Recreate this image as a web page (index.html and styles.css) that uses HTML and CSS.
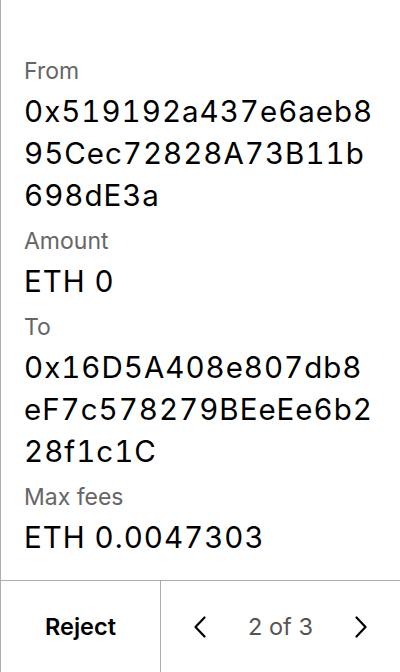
FILE: index.html
```html
<!DOCTYPE html>
<html>
<head>
<meta charset="utf-8">
<link rel="stylesheet" href="styles.css">
</head>
<body>
<div class="screen">
  <div class="details">
    <div class="field">
      <div class="label">From</div>
      <div class="value">0x519192a437e6aeb895Cec72828A73B11b698dE3a</div>
    </div>
    <div class="field">
      <div class="label">Amount</div>
      <div class="value">ETH 0</div>
    </div>
    <div class="field">
      <div class="label">To</div>
      <div class="value">0x16D5A408e807db8eF7c578279BEeEe6b228f1c1C</div>
    </div>
    <div class="field">
      <div class="label">Max fees</div>
      <div class="value">ETH 0.0047303</div>
    </div>
  </div>
  <div class="footer">
    <div class="reject">Reject</div>
    <div class="pager">
      <div class="nav">
        <svg width="14" height="22" viewBox="0 0 14 22"><polyline points="11.5,1.5 2.5,11 11.5,20.5" fill="none" stroke="#000" stroke-width="2.2" stroke-linecap="round" stroke-linejoin="round"/></svg>
      </div>
      <div class="count">2 of 3</div>
      <div class="nav">
        <svg width="14" height="22" viewBox="0 0 14 22"><polyline points="2.5,1.5 11.5,11 2.5,20.5" fill="none" stroke="#000" stroke-width="2.2" stroke-linecap="round" stroke-linejoin="round"/></svg>
      </div>
    </div>
  </div>
</div>
</body>
</html>
```

FILE: styles.css
```css
html, body {
  margin: 0;
  padding: 0;
  background: #fff;
}
body {
  font-family: Inter, "Noto Sans", sans-serif;
  color: #000;
}
.screen {
  width: 400px;
  height: 672px;
  box-sizing: border-box;
  border-left: 1px solid #adadad;
  display: flex;
  flex-direction: column;
}
.details {
  flex: 1;
  padding: 58px 24px 0 23px;
  display: flex;
  flex-direction: column;
  gap: 12px;
}
.field {
  display: flex;
  flex-direction: column;
  gap: 6px;
}
.label {
  font-size: 23px;
  line-height: 26px;
  color: #666;
}
.value {
  font-size: 29.5px;
  line-height: 42px;
  letter-spacing: 1px;
  font-feature-settings: "tnum";
  word-break: break-all;
}
.footer {
  height: 92px;
  border-top: 1px solid #adadad;
  box-sizing: border-box;
  display: flex;
}
.reject {
  width: 159px;
  border-right: 1px solid #adadad;
  display: flex;
  align-items: center;
  justify-content: center;
  font-size: 23.5px;
  font-weight: 600;
}
.pager {
  flex: 1;
  display: flex;
  align-items: center;
  justify-content: space-between;
  padding: 0 19px;
}
.nav {
  width: 40px;
  height: 40px;
  display: flex;
  align-items: center;
  justify-content: center;
}
.count {
  font-size: 23.5px;
  color: #555;
}
```
